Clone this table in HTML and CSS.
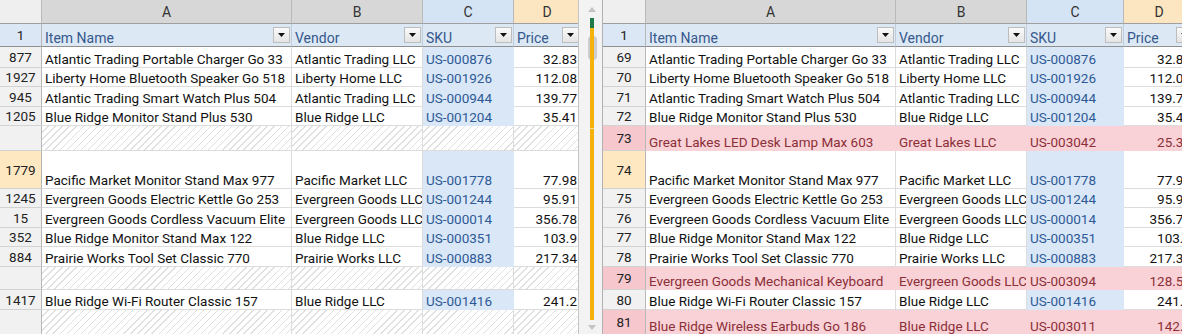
FILE: index.html
```html
<!DOCTYPE html>
<html lang="en">
<head>
<meta charset="utf-8">
<title>Split sheet view</title>
<link rel="stylesheet" href="styles.css">
</head>
<body>
<div class="sheet">
  <div class="pane left">
    <div class="row h24 colhead">
      <div class="corner"></div>
      <div class="ch">A</div>
      <div class="ch">B</div>
      <div class="ch ch-c">C</div>
      <div class="ch ch-d">D</div>
    </div>
    <div class="row h23 hdr">
      <div class="rh rh-hdr">1</div>
      <div class="th"><span>Item Name</span><span class="dd"><svg width="7" height="4" viewBox="0 0 7 4"><path d="M0 0h7L3.5 4z"/></svg></span></div>
      <div class="th"><span>Vendor</span><span class="dd"><svg width="7" height="4" viewBox="0 0 7 4"><path d="M0 0h7L3.5 4z"/></svg></span></div>
      <div class="th"><span>SKU</span><span class="dd"><svg width="7" height="4" viewBox="0 0 7 4"><path d="M0 0h7L3.5 4z"/></svg></span></div>
      <div class="th"><span>Price</span><span class="dd"><svg width="7" height="4" viewBox="0 0 7 4"><path d="M0 0h7L3.5 4z"/></svg></span></div>
    </div>
    <div class="row h21"><div class="rh">877</div><div class="c">Atlantic Trading Portable Charger Go 33</div><div class="c">Atlantic Trading LLC</div><div class="c sku">US-000876</div><div class="c num">32.83</div></div>
    <div class="row h19"><div class="rh">1927</div><div class="c">Liberty Home Bluetooth Speaker Go 518</div><div class="c">Liberty Home LLC</div><div class="c sku">US-001926</div><div class="c num">112.08</div></div>
    <div class="row h20"><div class="rh">945</div><div class="c">Atlantic Trading Smart Watch Plus 504</div><div class="c">Atlantic Trading LLC</div><div class="c sku">US-000944</div><div class="c num">139.77</div></div>
    <div class="row h19"><div class="rh">1205</div><div class="c">Blue Ridge Monitor Stand Plus 530</div><div class="c">Blue Ridge LLC</div><div class="c sku">US-001204</div><div class="c num">35.41</div></div>
    <div class="row h25 hid"><div class="rh"></div><div class="c"></div><div class="c"></div><div class="c"></div><div class="c"></div></div>
    <div class="row h38 sel"><div class="rh">1779</div><div class="c">Pacific Market Monitor Stand Max 977</div><div class="c">Pacific Market LLC</div><div class="c sku">US-001778</div><div class="c num">77.98</div></div>
    <div class="row h19"><div class="rh">1245</div><div class="c">Evergreen Goods Electric Kettle Go 253</div><div class="c">Evergreen Goods LLC</div><div class="c sku">US-001244</div><div class="c num">95.91</div></div>
    <div class="row h20"><div class="rh">15</div><div class="c">Evergreen Goods Cordless Vacuum Elite</div><div class="c">Evergreen Goods LLC</div><div class="c sku">US-000014</div><div class="c num">356.78</div></div>
    <div class="row h19"><div class="rh">352</div><div class="c">Blue Ridge Monitor Stand Max 122</div><div class="c">Blue Ridge LLC</div><div class="c sku">US-000351</div><div class="c num">103.9</div></div>
    <div class="row h20"><div class="rh">884</div><div class="c">Prairie Works Tool Set Classic 770</div><div class="c">Prairie Works LLC</div><div class="c sku">US-000883</div><div class="c num">217.34</div></div>
    <div class="row h23 hid"><div class="rh"></div><div class="c"></div><div class="c"></div><div class="c"></div><div class="c"></div></div>
    <div class="row h20"><div class="rh">1417</div><div class="c">Blue Ridge Wi-Fi Router Classic 157</div><div class="c">Blue Ridge LLC</div><div class="c sku">US-001416</div><div class="c num">241.2</div></div>
    <div class="row h25 hid"><div class="rh"></div><div class="c"></div><div class="c"></div><div class="c"></div><div class="c"></div></div>
  </div>

  <div class="vscroll">
    <div class="sb-arrow sb-up"></div>
    <div class="sb-thumb"></div>
    <div class="sb-green"></div>
    <div class="sb-orange"></div>
    <div class="sb-tick"></div>
    <div class="sb-arrow sb-down"></div>
  </div>

  <div class="pane right">
    <div class="row h24 colhead">
      <div class="corner"></div>
      <div class="ch">A</div>
      <div class="ch">B</div>
      <div class="ch ch-c">C</div>
      <div class="ch ch-d">D</div>
    </div>
    <div class="row h23 hdr">
      <div class="rh rh-hdr">1</div>
      <div class="th"><span>Item Name</span><span class="dd"><svg width="7" height="4" viewBox="0 0 7 4"><path d="M0 0h7L3.5 4z"/></svg></span></div>
      <div class="th"><span>Vendor</span><span class="dd"><svg width="7" height="4" viewBox="0 0 7 4"><path d="M0 0h7L3.5 4z"/></svg></span></div>
      <div class="th"><span>SKU</span><span class="dd"><svg width="7" height="4" viewBox="0 0 7 4"><path d="M0 0h7L3.5 4z"/></svg></span></div>
      <div class="th"><span>Price</span><span class="dd"><svg width="7" height="4" viewBox="0 0 7 4"><path d="M0 0h7L3.5 4z"/></svg></span></div>
    </div>
    <div class="row h21"><div class="rh">69</div><div class="c">Atlantic Trading Portable Charger Go 33</div><div class="c">Atlantic Trading LLC</div><div class="c sku">US-000876</div><div class="c num">32.83</div></div>
    <div class="row h19"><div class="rh">70</div><div class="c">Liberty Home Bluetooth Speaker Go 518</div><div class="c">Liberty Home LLC</div><div class="c sku">US-001926</div><div class="c num">112.08</div></div>
    <div class="row h20"><div class="rh">71</div><div class="c">Atlantic Trading Smart Watch Plus 504</div><div class="c">Atlantic Trading LLC</div><div class="c sku">US-000944</div><div class="c num">139.77</div></div>
    <div class="row h19"><div class="rh">72</div><div class="c">Blue Ridge Monitor Stand Plus 530</div><div class="c">Blue Ridge LLC</div><div class="c sku">US-001204</div><div class="c num">35.41</div></div>
    <div class="row h25 flag"><div class="rh">73</div><div class="c">Great Lakes LED Desk Lamp Max 603</div><div class="c">Great Lakes LLC</div><div class="c">US-003042</div><div class="c num">25.36</div></div>
    <div class="row h38 sel"><div class="rh">74</div><div class="c">Pacific Market Monitor Stand Max 977</div><div class="c">Pacific Market LLC</div><div class="c sku">US-001778</div><div class="c num">77.98</div></div>
    <div class="row h19"><div class="rh">75</div><div class="c">Evergreen Goods Electric Kettle Go 253</div><div class="c">Evergreen Goods LLC</div><div class="c sku">US-001244</div><div class="c num">95.91</div></div>
    <div class="row h20"><div class="rh">76</div><div class="c">Evergreen Goods Cordless Vacuum Elite</div><div class="c">Evergreen Goods LLC</div><div class="c sku">US-000014</div><div class="c num">356.78</div></div>
    <div class="row h19"><div class="rh">77</div><div class="c">Blue Ridge Monitor Stand Max 122</div><div class="c">Blue Ridge LLC</div><div class="c sku">US-000351</div><div class="c num">103.9</div></div>
    <div class="row h20"><div class="rh">78</div><div class="c">Prairie Works Tool Set Classic 770</div><div class="c">Prairie Works LLC</div><div class="c sku">US-000883</div><div class="c num">217.34</div></div>
    <div class="row h23 flag"><div class="rh">79</div><div class="c">Evergreen Goods Mechanical Keyboard</div><div class="c">Evergreen Goods LLC</div><div class="c">US-003094</div><div class="c num">128.54</div></div>
    <div class="row h20"><div class="rh">80</div><div class="c">Blue Ridge Wi-Fi Router Classic 157</div><div class="c">Blue Ridge LLC</div><div class="c sku">US-001416</div><div class="c num">241.2</div></div>
    <div class="row h25 flag"><div class="rh">81</div><div class="c">Blue Ridge Wireless Earbuds Go 186</div><div class="c">Blue Ridge LLC</div><div class="c">US-003011</div><div class="c num">142.6</div></div>
  </div>
</div>
</body>
</html>
```

FILE: styles.css
```css
* { box-sizing: border-box; margin: 0; padding: 0; }

html, body {
  width: 1182px;
  height: 334px;
  overflow: hidden;
  background: #ffffff;
}

body {
  font-family: Roboto, "Liberation Sans", Arial, sans-serif;
  font-size: 13.5px;
  color: #111111;
}

.sheet {
  display: flex;
  height: 334px;
}

.pane {
  flex: none;
  overflow: hidden;
  height: 334px;
}

.left { width: 578px; }
.right { width: 579px; }

.row {
  display: grid;
  grid-template-columns: 42px 250px 131px 91px 67px;
}

.right .row {
  grid-template-columns: 43px 250px 131px 97px 71px;
}

.h19 { height: 19px; }
.h20 { height: 20px; }
.h21 { height: 21px; }
.h23 { height: 23px; }
.h24 { height: 24px; }
.h25 { height: 25px; }
.h38 { height: 38px; }

/* column letters */
.corner {
  background: #efefef;
  border-right: 1px solid #b9b9b9;
  border-bottom: 1px solid #9f9f9f;
}

.ch {
  display: flex;
  align-items: center;
  justify-content: center;
  background: #d7d7d7;
  color: #333333;
  font-size: 14px;
  border-right: 1px solid #b9b9b9;
  border-bottom: 1px solid #9f9f9f;
}

.ch-c { background: #d5e4f5; }
.ch-d { background: #fbe6c1; }

/* row numbers */
.rh {
  display: flex;
  align-items: center;
  justify-content: center;
  background: #f1f1f1;
  color: #222222;
  font-size: 13.5px;
  border-right: 1px solid #b7b7b7;
  border-bottom: 1px solid #d2d2d2;
}

.rh-hdr {
  background: #dbe7f4;
  border-bottom: 1px solid #8f8f8f;
}

/* table header row */
.th {
  display: flex;
  align-items: flex-end;
  justify-content: space-between;
  padding: 0 1px 0 3px;
  background: #dde8f5;
  color: #35598c;
  font-size: 14px;
  line-height: 16px;
  white-space: nowrap;
  border-right: 1px solid #c3cdd9;
  border-bottom: 1px solid #8f8f8f;
}

.dd {
  align-self: center;
  display: flex;
  align-items: center;
  justify-content: center;
  width: 17px;
  height: 16px;
  flex: none;
  border: 1px solid #bdbdbd;
  background: linear-gradient(#fafafa, #e4e4e4);
}

.dd svg { fill: #111111; }

/* body cells */
.c {
  display: flex;
  align-items: flex-end;
  padding: 0 3px;
  line-height: 16px;
  white-space: nowrap;
  overflow: hidden;
  border-right: 1px solid #dcdcdc;
  border-bottom: 1px solid #dcdcdc;
}

.num { justify-content: flex-end; }

.sku {
  background: #dae7f7;
  color: #2d5a96;
  border-color: #dae7f7;
}

/* selected row */
.sel .rh { background: #fde8c2; }

/* filtered-out rows (left pane) */
.hid .c {
  background: repeating-linear-gradient(135deg, #ffffff 0 4px, #e0e0e0 4px 5px);
}

/* flagged rows (right pane) */
.flag .c {
  background: #f9d2d7;
  color: #8c2f37;
  border-color: #f9d2d7;
}

.flag .rh { background: #f6c8ce; }

/* split scrollbar */
.vscroll {
  flex: none;
  position: relative;
  width: 25px;
  height: 334px;
  background: #f3f3f3;
  border-left: 1px solid #c4c4c4;
  border-right: 1px solid #b1b1b1;
}

.sb-arrow {
  position: absolute;
  left: 9px;
  width: 0;
  height: 0;
  border-left: 4px solid transparent;
  border-right: 4px solid transparent;
}

.sb-up {
  top: 7px;
  border-bottom: 5px solid #c3c3c3;
}

.sb-down {
  top: 325px;
  border-top: 5px solid #c3c3c3;
}

.sb-thumb {
  position: absolute;
  left: 9px;
  top: 36px;
  width: 9px;
  height: 24px;
  border-radius: 4px;
  background: #cdcdcd;
}

.sb-green {
  position: absolute;
  left: 11px;
  top: 18px;
  width: 4px;
  height: 10px;
  background: #1f7a47;
}

.sb-orange {
  position: absolute;
  left: 11px;
  top: 28px;
  width: 4px;
  height: 292px;
  background: #f4b20f;
}

.sb-tick {
  position: absolute;
  left: 11px;
  top: 128px;
  width: 4px;
  height: 1px;
  background: #fbe1a0;
}
```
